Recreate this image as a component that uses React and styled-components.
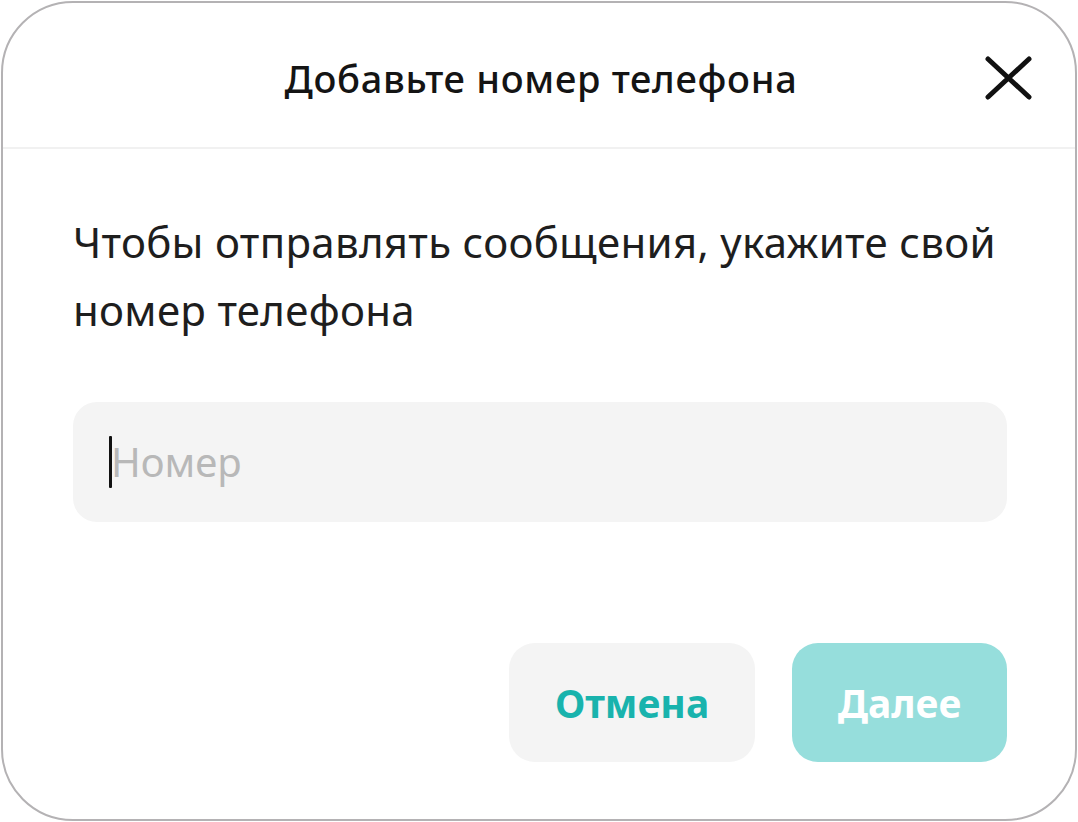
import React, { useState } from "react";
import styled, { createGlobalStyle } from "styled-components";

const GlobalStyle = createGlobalStyle`
	html, body {
		margin: 0;
		padding: 0;
		background: #ffffff;
	}
	body {
		font-family: "Noto Sans", "Open Sans", "Liberation Sans", sans-serif;
	}
	* {
		box-sizing: border-box;
	}
`

const Frame = styled.div`
	margin: 1px;
	width: 1076px;
	height: 820px;
	border: 2px solid #b4b2b4;
	border-radius: 72px;
	background: #ffffff;
	display: flex;
	flex-direction: column;
	overflow: hidden;
`

const Header = styled.div`
	height: 146px;
	display: grid;
	grid-template-columns: 1fr auto 1fr;
	align-items: center;
	border-bottom: 2px solid #f1f1f1;
	padding-top: 6px;
`

const Title = styled.h2`
	grid-column: 2;
	margin: 0;
	font-size: 38px;
	font-weight: 500;
	color: #141414;
	letter-spacing: 0.7px;
	padding-left: 4px;
`

const CloseButton = styled.button`
	grid-column: 3;
	justify-self: end;
	margin-right: 42px;
	width: 48px;
	height: 48px;
	padding: 0;
	border: none;
	background: transparent;
	cursor: pointer;
	display: flex;
	align-items: center;
	justify-content: center;
`

const Body = styled.div`
	flex: 1;
	display: flex;
	flex-direction: column;
	padding: 59px 68px 57px 70px;
`

const Message = styled.p`
	margin: 0;
	font-size: 42px;
	line-height: 68px;
	color: #1e1e1e;
	letter-spacing: 0.3px;
`

const InputBox = styled.label`
	margin-top: 58px;
	height: 120px;
	border-radius: 24px;
	background: #f4f4f4;
	display: flex;
	align-items: center;
	padding-left: 36px;
`

const Caret = styled.span`
	width: 3px;
	height: 52px;
	background: #111;
	border-radius: 1px;
`

const Placeholder = styled.span`
	font-size: 40px;
	color: #b8b8b8;
	margin-left: -1px;
	margin-top: -2px;
`

const Actions = styled.div`
	margin-top: auto;
	display: flex;
	justify-content: flex-end;
	gap: 37px;
`

const Button = styled.button`
	height: 119px;
	width: ${p => p.$w}px;
	border: none;
	border-radius: 26px;
	background: ${p => p.$primary ? "#96dedc" : "#f4f4f4"};
	color: ${p => p.$primary ? "#ffffff" : "#19b3ad"};
	font-family: "Noto Sans", "Open Sans", "Liberation Sans", sans-serif;
	font-size: 39px;
	font-weight: 700;
	cursor: pointer;
	padding: 0;
`

const App = () => {
	const [phone, set_phone] = useState("")

	return <>
		<GlobalStyle />
		<Frame>
			<Header>
				<Title>Добавьте номер телефона</Title>
				<CloseButton aria-label="close">
					<svg width="48" height="48" viewBox="0 0 48 48">
						<path d="M3 5 L44 43 M44 5 L3 43" stroke="#111" strokeWidth="5" strokeLinecap="round" fill="none" />
					</svg>
				</CloseButton>
			</Header>
			<Body>
				<Message>Чтобы отправлять сообщения, укажите свой номер телефона</Message>
				<InputBox>
					<Caret />
					<Placeholder>{phone || "Номер"}</Placeholder>
				</InputBox>
				<Actions>
					<Button $w={246}>Отмена</Button>
					<Button $w={215} $primary>Далее</Button>
				</Actions>
			</Body>
		</Frame>
	</>
}

export default App;
